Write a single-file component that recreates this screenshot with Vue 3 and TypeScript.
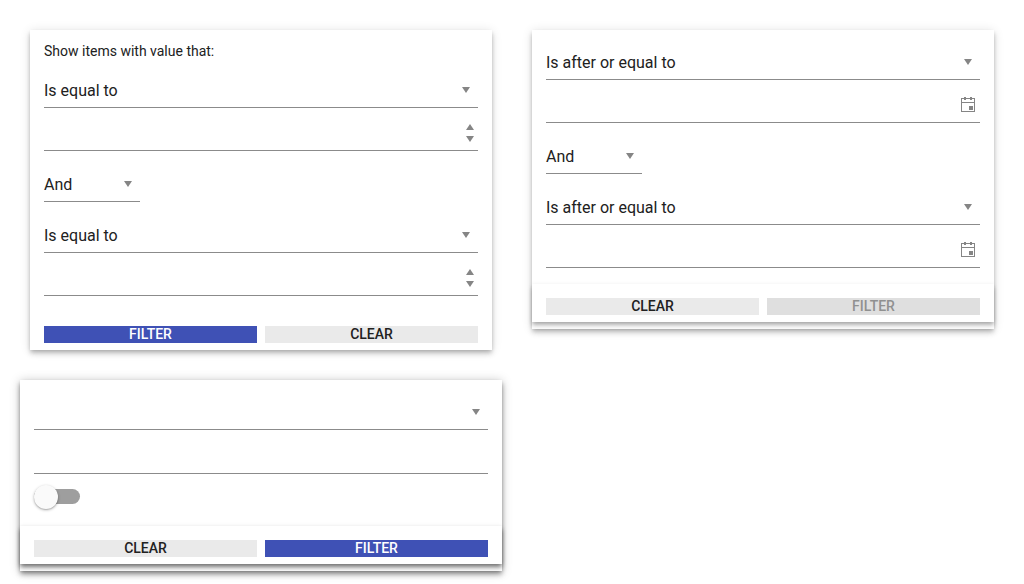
<script setup lang="ts">
interface Field {
  kind: 'select' | 'number' | 'date' | 'text'
  text?: string
  size?: 'short'
}
interface Action {
  label: string
  tone: 'primary' | 'plain' | 'disabled'
}
interface Panel {
  id: string
  title?: string
  fields: Field[]
  toggle?: boolean
  raised: boolean
  actions: Action[]
}

const panels: Panel[] = [
  {
    id: 'numeric',
    title: 'Show items with value that:',
    raised: false,
    fields: [
      { kind: 'select', text: 'Is equal to' },
      { kind: 'number' },
      { kind: 'select', text: 'And', size: 'short' },
      { kind: 'select', text: 'Is equal to' },
      { kind: 'number' },
    ],
    actions: [
      { label: 'Filter', tone: 'primary' },
      { label: 'Clear', tone: 'plain' },
    ],
  },
  {
    id: 'date',
    raised: true,
    fields: [
      { kind: 'select', text: 'Is after or equal to' },
      { kind: 'date' },
      { kind: 'select', text: 'And', size: 'short' },
      { kind: 'select', text: 'Is after or equal to' },
      { kind: 'date' },
    ],
    actions: [
      { label: 'Clear', tone: 'plain' },
      { label: 'Filter', tone: 'disabled' },
    ],
  },
  {
    id: 'custom',
    raised: true,
    toggle: true,
    fields: [{ kind: 'select' }, { kind: 'text' }],
    actions: [
      { label: 'Clear', tone: 'plain' },
      { label: 'Filter', tone: 'primary' },
    ],
  },
]
</script>

<template>
  <main class="page">
    <section v-for="panel in panels" :key="panel.id" class="panel" :class="[panel.id, { raised: panel.raised }]">
      <div class="body">
        <div v-if="panel.title" class="title">{{ panel.title }}</div>
        <div v-for="(field, i) in panel.fields" :key="i" class="field" :class="[field.kind, field.size]">
          <span class="value">{{ field.text }}</span>
          <svg v-if="field.kind === 'select'" class="arrow" width="8" height="6" viewBox="0 0 8 6">
            <path d="M0 0h8L4 6z" />
          </svg>
          <span v-else-if="field.kind === 'number'" class="spinner">
            <svg width="8" height="6" viewBox="0 0 8 6"><path d="M0 6h8L4 0z" /></svg>
            <svg width="8" height="6" viewBox="0 0 8 6"><path d="M0 0h8L4 6z" /></svg>
          </span>
          <svg v-else-if="field.kind === 'date'" class="calendar" width="14" height="15" viewBox="0 0 14 15">
            <path
              fill-rule="evenodd"
              d="M0 1h3V0h2v1h4V0h2v1h3v14H0zM1 2v3h12V2h-2v1H9V2H5v1H3V2zM1 6v8h12V6zM8 9h4v4H8z"
            />
          </svg>
        </div>
        <button v-if="panel.toggle" type="button" class="switch" role="switch" aria-checked="false">
          <span class="thumb"></span>
        </button>
      </div>
      <footer class="actions">
        <button v-for="action in panel.actions" :key="action.label" type="button" class="action" :class="action.tone">
          {{ action.label }}
        </button>
      </footer>
    </section>
  </main>
</template>

<style>
body {
  margin: 0;
  background: #fff;
  overflow: hidden;
}
</style>

<style scoped>
.page {
  box-sizing: border-box;
  width: 1024px;
  height: 584px;
  padding: 30px 30px 0 20px;
  display: grid;
  grid-template-columns: 482px 462px;
  grid-template-rows: 320px 192px;
  column-gap: 30px;
  row-gap: 30px;
  align-items: start;
  font-family: Roboto, "Liberation Sans", sans-serif;
  font-size: 16px;
  color: #212121;
}
.panel {
  background: #fff;
  box-shadow: 0 2px 4px -1px rgba(0, 0, 0, 0.2), 0 4px 5px 0 rgba(0, 0, 0, 0.14), 0 1px 10px 0 rgba(0, 0, 0, 0.12);
}
.numeric {
  width: 462px;
  height: 320px;
  margin-left: 10px;
}
.date {
  height: 299px;
}
.custom {
  height: 191px;
  box-shadow: 0 2px 4px -1px rgba(0, 0, 0, 0.34), 0 4px 5px 0 rgba(0, 0, 0, 0.22), 0 1px 10px 0 rgba(0, 0, 0, 0.23);
}
.body {
  box-sizing: border-box;
  padding: 15px 14px 0;
}
.numeric .body {
  height: 282px;
  padding-top: 12px;
}
.date .body {
  height: 254px;
}
.custom .body {
  height: 146px;
}
.title {
  height: 18px;
  line-height: 18px;
  margin-bottom: 13px;
  font-size: 14px;
}
.field {
  box-sizing: border-box;
  height: 35px;
  margin-bottom: 8px;
  border-bottom: 1px solid #8b8b8b;
  display: flex;
  align-items: center;
  justify-content: space-between;
}
.field.number,
.field.date,
.field.short {
  margin-bottom: 16px;
}
.field.short {
  width: 96px;
}
.field.text {
  height: 36px;
  margin-top: 8px;
}
.value {
  padding-top: 2px;
  line-height: 24px;
}
svg {
  display: block;
  fill: #858585;
}
.arrow {
  margin-right: 8px;
}
.spinner {
  display: flex;
  flex-direction: column;
  gap: 6px;
  margin: 0 4px 1px 0;
}
.calendar {
  margin: 0 5px 1px 0;
}
.switch {
  display: block;
  width: 46px;
  height: 15px;
  margin-top: 15px;
  padding: 0;
  border: 0;
  border-radius: 8px;
  background: #9e9e9e;
}
.thumb {
  display: block;
  width: 24px;
  height: 24px;
  margin: -4px 0 -5px;
  border-radius: 50%;
  background: #fafafa;
  box-shadow: 0 1px 3px rgba(0, 0, 0, 0.3), 0 1px 1px rgba(0, 0, 0, 0.12);
}
.actions {
  box-sizing: border-box;
  height: 38px;
  padding: 14px 14px 7px;
  display: flex;
  gap: 8px;
  background: #fff;
}
.raised .actions {
  box-shadow: 0 3px 4px -1px rgba(0, 0, 0, 0.2), 0 4px 5px 0 rgba(0, 0, 0, 0.14), 0 1px 5px 0 rgba(0, 0, 0, 0.08);
}
.custom.raised .actions {
  box-shadow: 0 3px 4px -1px rgba(0, 0, 0, 0.36), 0 4px 5px 0 rgba(0, 0, 0, 0.26), 0 1px 5px 0 rgba(0, 0, 0, 0.1);
}
.action {
  flex: 1;
  height: 17px;
  padding: 0;
  border: 0;
  font: 500 14px/17px Roboto, "Liberation Sans", sans-serif;
  text-transform: uppercase;
  background: #eaeaea;
  color: #212121;
}
.action.primary {
  background: #3f51b5;
  color: #fff;
}
.action.disabled {
  background: #dfdfdf;
  color: #909090;
}
</style>
